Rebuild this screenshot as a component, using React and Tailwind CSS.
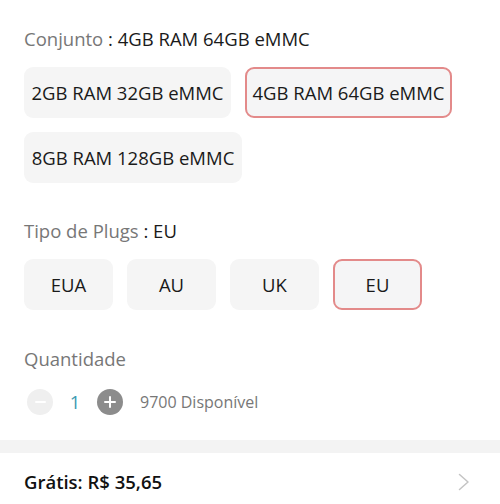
import React from "react";

const font = { fontFamily: '"Open Sans", "Noto Sans", sans-serif' };

function Opt({ label, selected, className = "" }) {
  return (
    <div
      className={
        "h-[51px] flex items-center justify-center rounded-[9px] text-[18.5px] text-[#1a1a1a] " +
        (selected
          ? "border-2 border-[#e38a8a] bg-[#f5f5f6] "
          : "border-2 border-transparent bg-[#f5f5f5] ") +
        className
      }
    >
      {label}
    </div>
  );
}

export default function App() {
  return (
    <div className="w-[500px] h-[504px] bg-white overflow-hidden" style={font}>
      <div className="px-6 pt-[27px]">
        <div className="text-[18.5px] leading-[24px]">
          <span className="text-[#777]">Conjunto</span>
          <span className="text-[#1a1a1a]"> : 4GB RAM 64GB eMMC</span>
        </div>
        <div className="mt-4 flex flex-wrap gap-[14px]">
          <Opt label="2GB RAM 32GB eMMC" className="w-[207px]" />
          <Opt label="4GB RAM 64GB eMMC" selected className="w-[207px]" />
          <Opt label="8GB RAM 128GB eMMC" className="w-[218px]" />
        </div>

        <div className="mt-9 text-[18.5px] leading-[24px]">
          <span className="text-[#777]">Tipo de Plugs</span>
          <span className="text-[#1a1a1a]"> : EU</span>
        </div>
        <div className="mt-4 flex gap-[14px]">
          <Opt label="EUA" className="w-[89px]" />
          <Opt label="AU" className="w-[89px]" />
          <Opt label="UK" className="w-[89px]" />
          <Opt label="EU" selected className="w-[89px]" />
        </div>

        <div className="mt-[37px] text-[18.5px] leading-[24px] text-[#777]">Quantidade</div>
        <div className="mt-[18px] flex items-center h-[26px] pl-[3px]">
          <div className="w-[26px] h-[26px] rounded-full bg-[#efefef] flex items-center justify-center">
            <div className="w-[11px] h-[2px] bg-white rounded" />
          </div>
          <div className="w-[44px] text-center text-[18.5px] text-[#3d9ab2]">1</div>
          <div className="w-[26px] h-[26px] rounded-full bg-[#8c8c8c] flex items-center justify-center relative">
            <div className="w-[12px] h-[2px] bg-white rounded" />
            <div className="absolute w-[2px] h-[12px] bg-white rounded" />
          </div>
          <div className="ml-[17px] text-[16px] text-[#777]">9700 Disponível</div>
        </div>
      </div>

      <div className="mt-[25px] h-[13px] bg-[#f3f3f3]" />

      <div className="mt-[17px] pl-6 pr-[30px] flex items-center justify-between h-[24px]">
        <div className="text-[18.5px] font-semibold text-[#111]">Grátis: R$ 35,65</div>
        <svg width="12" height="18" viewBox="0 0 12 18" fill="none">
          <path d="M1.5 1.5 L10 9 L1.5 16.5" stroke="#c4c4c4" strokeWidth="1.5" strokeLinecap="round" strokeLinejoin="round" />
        </svg>
      </div>
    </div>
  );
}
